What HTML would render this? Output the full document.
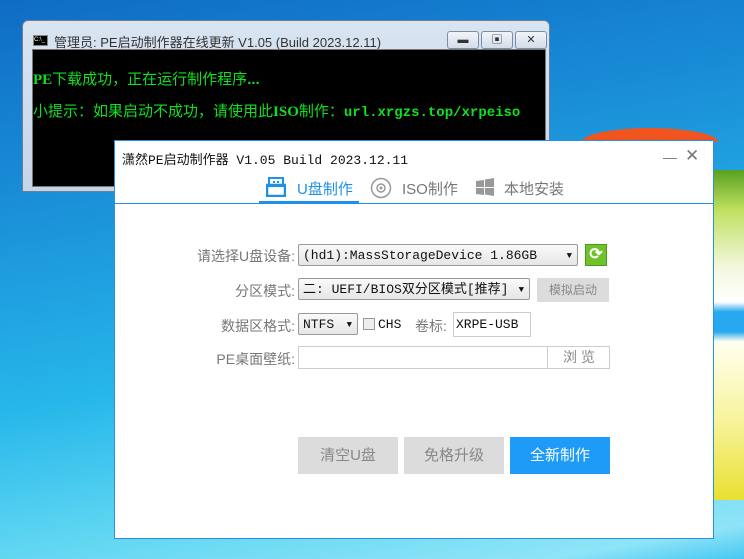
<!DOCTYPE html>
<html><head><meta charset="utf-8"><style>
*{margin:0;padding:0;box-sizing:border-box}
body{width:744px;height:559px;overflow:hidden;position:relative;font-family:"Liberation Sans","Noto Sans CJK SC",sans-serif;
background:linear-gradient(170deg,#0f6cc4 0%,#1a8fd8 30%,#27b7ea 60%,#5fd6f2 80%,#8fe4f7 95%,#46c8f2 100%);}
.abs{position:absolute}
.con{left:22px;top:20px;width:528px;height:172px;background:linear-gradient(#d9e4f1,#c5d5e8);border:1px solid #6f7f93;border-radius:6px 6px 0 0}
.ctitle{font-size:13px;color:#333}
.cblack{left:9px;top:28px;width:514px;height:138px;background:#000;border:1px solid #777}
.g{color:#10e020;font-family:"Liberation Sans","WenQuanYi Zen Hei",sans-serif;font-size:15px}
.wb{top:10px;height:18px;border:1px solid #7c8ea6;border-radius:3px;background:linear-gradient(#f1f5fa,#d3dcea);font-size:11px;text-align:center;line-height:16px;color:#333}
.app{left:114px;top:140px;width:600px;height:399px;background:#fff;border:1px solid #2b8fe8}
.lbl{font-size:14px;color:#777;text-align:right;width:180px;left:0}
.sel{border:1px solid #999;border-radius:2px;background:linear-gradient(#fafafa,#e6e6e6);font-family:"Liberation Mono","WenQuanYi Zen Hei",monospace;font-size:13px;color:#111;line-height:22px;padding-left:4px}
.sel:after{content:"▼";position:absolute;right:5px;top:0;font-size:9px}
.btn{top:296px;width:100px;height:37px;background:#dcdcdc;color:#888;font-size:15px;text-align:center;line-height:37px}
</style></head><body>
<div class="abs" style="left:713px;top:170px;width:31px;height:330px;background:linear-gradient(#5aa020 0%,#bfe060 12%,#f4f8e0 30%,#fff 40%,#28a8ee 43%,#28a8ee 49%,#fffff0 52%,#f8f4a0 75%,#e8e030 100%)"></div>
<div class="abs" style="left:582px;top:128px;width:136px;height:14px;background:#f05520;border-radius:68px 68px 0 0/14px 14px 0 0"></div>
<div class="abs con">
<div class="abs" style="left:10px;top:14px;width:15px;height:11px;background:#000;border:1px solid #888;color:#fff;font-size:6px;line-height:9px">C:\_</div>
<div class="abs ctitle" style="left:31px;top:11px">管理员:  PE启动制作器在线更新 V1.05 (Build 2023.12.11)</div>
<div class="abs wb" style="left:424px;width:32px">▬</div>
<div class="abs wb" style="left:458px;width:32px">▣</div>
<div class="abs wb" style="left:492px;width:32px">✕</div>
<div class="abs cblack">
<div class="abs g" style="left:0;top:18px"><b style="font-family:'Liberation Serif'">PE</b>下载成功，正在运行制作程序<b>...</b></div>
<div class="abs g" style="left:0;top:50px">小提示：如果启动不成功，请使用此<b style="font-family:'Liberation Serif'">ISO</b>制作：<b style="font-family:'Liberation Mono';font-size:14px">url.xrgzs.top/xrpeiso</b></div>
</div></div>
<div class="abs app">
<div class="abs" style="left:7px;top:8px;font-size:13px;font-family:'Liberation Mono','WenQuanYi Zen Hei',monospace;color:#111">潇然PE启动制作器 V1.05 Build 2023.12.11</div>
<div class="abs" style="left:548px;top:8px;font-size:14px;color:#777">—</div>
<div class="abs" style="left:570px;top:5px;font-size:17px;color:#777">✕</div>
<div class="abs" style="left:0;top:62px;width:598px;height:1px;background:#2b8fe8"></div>
<div class="abs" style="left:144px;top:60px;width:100px;height:3px;background:#1e90e8"></div>
<svg class="abs" style="left:151px;top:36px" width="20" height="20"><rect x="3" y="1" width="14" height="8" fill="none" stroke="#1e90e8" stroke-width="2"/><rect x="1" y="8" width="18" height="11" fill="none" stroke="#1e90e8" stroke-width="2.5"/><rect x="7" y="4" width="2" height="2" fill="#1e90e8"/><rect x="11" y="4" width="2" height="2" fill="#1e90e8"/></svg>
<div class="abs" style="left:182px;top:37px;font-size:15px;color:#1e90e8">U盘制作</div>
<svg class="abs" style="left:255px;top:36px" width="22" height="22"><circle cx="11" cy="11" r="9.5" fill="none" stroke="#999" stroke-width="1.5"/><circle cx="11" cy="11" r="4" fill="none" stroke="#999" stroke-width="1.5"/><circle cx="11" cy="11" r="1.5" fill="#999"/></svg>
<div class="abs" style="left:287px;top:37px;font-size:15px;color:#777">ISO制作</div>
<svg class="abs" style="left:361px;top:37px" width="18" height="18"><path d="M0 3l8-1v7H0zM9 1.5L18 0v9H9zM0 10h8v7l-8-1zM9 10h9v8l-9-1.5z" fill="#999"/></svg>
<div class="abs" style="left:389px;top:37px;font-size:15px;color:#777">本地安装</div>
<div class="abs lbl" style="top:105px">请选择U盘设备:</div>
<div class="abs sel" style="left:183px;top:103px;width:280px;height:22px">(hd1):MassStorageDevice 1.86GB</div>
<div class="abs" style="left:470px;top:103px;width:22px;height:22px;background:#6ec22a;border:1px solid #4e9a20;color:#fff;font-size:16px;text-align:center;line-height:20px;font-weight:bold">⟳</div>
<div class="abs lbl" style="top:140px">分区模式:</div>
<div class="abs sel" style="left:183px;top:137px;width:232px;height:22px">二: UEFI/BIOS双分区模式[推荐]</div>
<div class="abs" style="left:422px;top:137px;width:72px;height:24px;background:#dcdcdc;color:#888;font-size:12px;text-align:center;line-height:24px">模拟启动</div>
<div class="abs lbl" style="top:175px">数据区格式:</div>
<div class="abs sel" style="left:183px;top:172px;width:60px;height:22px">NTFS</div>
<div class="abs" style="left:248px;top:177px;width:12px;height:12px;border:1px solid #999;background:#eee"></div>
<div class="abs" style="left:263px;top:176px;font-size:13px;font-family:'Liberation Mono',monospace;color:#111">CHS</div>
<div class="abs" style="left:300px;top:175px;font-size:14px;color:#777">卷标:</div>
<div class="abs" style="left:338px;top:171px;width:78px;height:25px;border:1px solid #ccc;font-family:'Liberation Mono',monospace;font-size:13px;line-height:23px;padding-left:2px;color:#111">XRPE-USB</div>
<div class="abs lbl" style="top:208px">PE桌面壁纸:</div>
<div class="abs" style="left:183px;top:205px;width:312px;height:23px;border:1px solid #ccc"></div>
<div class="abs" style="left:432px;top:205px;width:63px;height:23px;border-left:1px solid #ccc;font-size:14px;color:#888;text-align:center;line-height:22px">浏 览</div>
<div class="abs btn" style="left:183px">清空U盘</div>
<div class="abs btn" style="left:289px">免格升级</div>
<div class="abs btn" style="left:395px;background:#1e9bf6;color:#fff">全新制作</div>
</div>
</body></html>
